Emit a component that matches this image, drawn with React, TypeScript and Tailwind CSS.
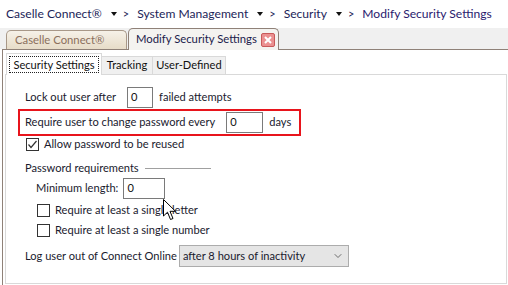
import { ChevronDown } from 'lucide-react'

const font = { fontFamily: 'Lato, "Liberation Sans", sans-serif' }

function Crumb({ label, last }: { label: string; last?: boolean }) {
  return (
    <div className="flex items-center whitespace-nowrap">
      <span className={last ? 'text-[#2a1a6e]' : 'text-[#1b2458]'}>{label}</span>
      {!last && (
        <div className="flex items-center">
          <svg width="6" height="4" viewBox="0 0 6 4" className="ml-[9px]">
            <path d="M0 0 H6 L3 4 Z" fill="#111" />
          </svg>
          <span className="ml-[6px] mr-[8px] text-[11px] text-[#1b2458]">&gt;</span>
        </div>
      )}
    </div>
  )
}

function Field({ value, w }: { value: string; w: string }) {
  return (
    <div className={`h-[21px] ${w} border border-[#7a7a7a] bg-white flex items-center pl-[3px] text-[#111]`}>
      {value}
    </div>
  )
}

function Check({ checked }: { checked?: boolean }) {
  return (
    <div className="w-[13px] h-[13px] shrink-0 border border-[#333] bg-white flex items-center justify-center">
      {checked && (
        <svg width="11" height="11" viewBox="0 0 11 11">
          <path d="M1.5 5.5 L4 8.5 L9.5 2" fill="none" stroke="#333" strokeWidth="1.2" />
        </svg>
      )}
    </div>
  )
}

export default function App() {
  return (
    <div className="w-[508px] h-[285px] bg-white overflow-hidden relative flex flex-col whitespace-nowrap" style={font}>
      {/* Breadcrumb */}
      <div className="h-[28px] flex items-center pl-[6px] text-[12.1px] shrink-0">
        <Crumb label="Caselle Connect®" />
        <Crumb label="System Management" />
        <Crumb label="Security" />
        <Crumb label="Modify Security Settings" last />
      </div>

      {/* Document tabs */}
      <div className="h-[21px] bg-[#f0f0f0] flex items-end shrink-0 relative text-[11.3px]">
        <div className="ml-[6px] h-[19px] w-[121px] rounded-t-[5px] border border-b-0 border-[#a89888] bg-gradient-to-b from-[#f6f1e8] to-[#e7dcc8] text-[#8b6f5c] pl-[8px] flex items-center">
          Caselle Connect®
        </div>
        <div className="ml-[1px] w-[151px] rounded-t-[5px] border border-b-0 border-[#8f8178] bg-[#f4f3f0] text-[#1b1b4b] pl-[7px] flex items-center justify-between pr-[3px] relative z-10 -mb-[1px] h-[22px]">
          <span>Modify Security Settings</span>
          <div className="w-[14px] h-[14px] border border-[#c85a5a] bg-[#eb9090] rounded-[2px] flex items-center justify-center">
            <svg width="8" height="8" viewBox="0 0 8 8">
              <path d="M1 1 L7 7 M7 1 L1 7" stroke="#fff" strokeWidth="2" />
            </svg>
          </div>
        </div>
      </div>

      {/* Outer panel */}
      <div className="flex-1 ml-[2px] border-l border-t border-[#8f8178] bg-white flex flex-col pl-[2px] pt-[3px] pr-[1px] pb-[1px] text-[11.1px]">
        {/* Inner tabs */}
        <div className="flex items-end h-[21px] shrink-0">
          <div className="w-[96px] border border-b-0 border-[#d9d9d9] bg-white flex items-center justify-center relative z-10 -mb-[1px] h-[22px] ml-[1px]">
            <span className="border border-dotted border-[#222] px-[3px] leading-[15px] text-[#111]">Security Settings</span>
          </div>
          <div className="h-[18px] w-[51px] border border-b-0 border-l-0 border-[#d9d9d9] bg-[#f0f0f0] text-[#111] flex items-center justify-center">
            Tracking
          </div>
          <div className="h-[18px] w-[73px] border border-b-0 border-l-0 border-[#d9d9d9] bg-[#f0f0f0] text-[#111] flex items-center justify-center">
            User-Defined
          </div>
        </div>

        {/* Inner panel */}
        <div className="flex-1 border border-[#d9d9d9] bg-white flex flex-col text-[#1a1a2e] pt-[12px]">
          <div className="flex items-center pl-[19px] h-[21px]">
            <span>Lock out user after</span>
            <div className="ml-[11px]">
              <Field value="0" w="w-[26px]" />
            </div>
            <span className="ml-[6px]">failed attempts</span>
          </div>

          <div className="ml-[12px] mt-[1px] w-[283px] h-[27px] border-2 border-[#e8141c] flex items-center pl-[5px]">
            <span>Require user to change password every</span>
            <div className="ml-[11px]">
              <Field value="0" w="w-[37px]" />
            </div>
            <span className="ml-[6px]">days</span>
          </div>

          <div className="flex items-center pl-[20px] mt-[2px] h-[13px] gap-[5px]">
            <Check checked />
            <span>Allow password to be reused</span>
          </div>

          <div className="flex items-center pl-[19px] mt-[10px] h-[14px]">
            <span>Password requirements</span>
            <div className="ml-[6px] w-[66px] h-[1px] bg-[#a0a0a0]" />
          </div>

          <div className="flex items-center pl-[30px] mt-[3px] h-[21px]">
            <span>Minimum length:</span>
            <div className="ml-[5px]">
              <Field value="0" w="w-[42px]" />
            </div>
          </div>

          <div className="flex items-center pl-[31px] mt-[5px] h-[13px] gap-[5px]">
            <Check />
            <span>Require at least a single letter</span>
          </div>

          <div className="flex items-center pl-[31px] mt-[7px] h-[13px] gap-[5px]">
            <Check />
            <span>Require at least a single number</span>
          </div>

          <div className="flex items-center pl-[19px] mt-[8px] h-[22px]">
            <span>Log user out of Connect Online</span>
            <div className="ml-[2px] w-[170px] h-[22px] border border-[#acacac] bg-[#e5e5e5] flex items-center justify-between pl-[3px] pr-[4px]">
              <span>after 8 hours of inactivity</span>
              <ChevronDown size={12} strokeWidth={1.5} color="#444" />
            </div>
          </div>
        </div>
      </div>

      {/* Mouse cursor */}
      <svg className="absolute left-[163px] top-[199px]" width="14" height="24" viewBox="0 0 14 24">
        <path d="M0.5 0.5 L0.5 17 L4.5 13.2 L7.5 20.5 L10 19.5 L7 12.3 L12.5 12.3 Z" fill="#fff" stroke="#000" strokeWidth="1" strokeLinejoin="round" />
      </svg>
    </div>
  )
}
